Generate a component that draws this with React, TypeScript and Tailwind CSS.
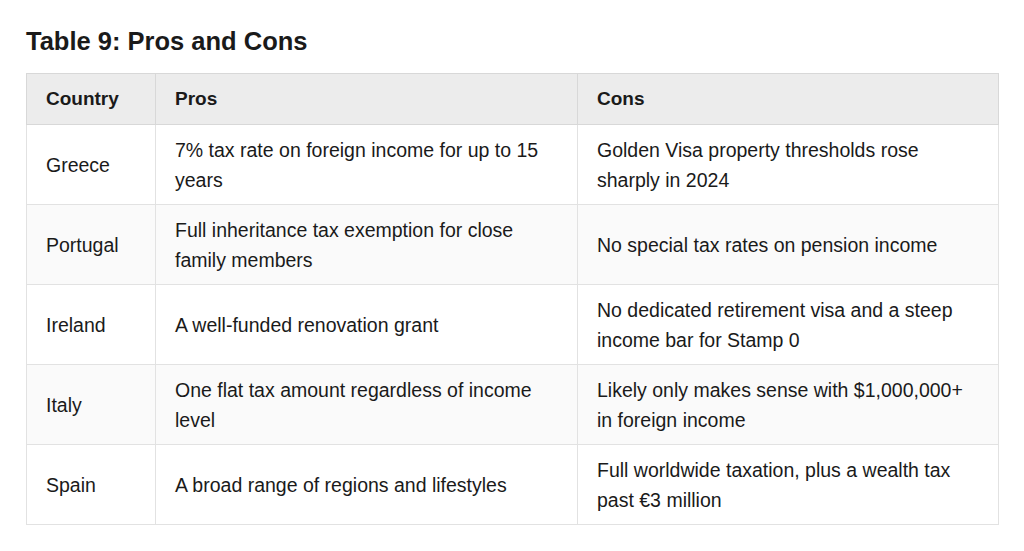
const rows = [
  ["Greece", "7% tax rate on foreign income for up to 15 years", "Golden Visa property thresholds rose sharply in 2024"],
  ["Portugal", "Full inheritance tax exemption for close family members", "No special tax rates on pension income"],
  ["Ireland", "A well-funded renovation grant", "No dedicated retirement visa and a steep income bar for Stamp 0"],
  ["Italy", "One flat tax amount regardless of income level", "Likely only makes sense with $1,000,000+ in foreign income"],
  ["Spain", "A broad range of regions and lifestyles", "Full worldwide taxation, plus a wealth tax past €3 million"],
]

export default function App() {
  return (
    <div className="min-h-screen bg-white px-[26px] pt-[24px] text-[#1a1a1a] font-['Liberation_Sans',Arial,sans-serif]">
      <h2 className="text-[25.5px] font-bold leading-[34px] mb-[15px]">Table 9: Pros and Cons</h2>
      <table className="w-[973px] table-fixed border-collapse border border-[#c6c6c6] text-[19.5px] leading-[30px]">
        <colgroup>
          <col className="w-[129px]" />
          <col className="w-[422px]" />
          <col />
        </colgroup>
        <thead>
          <tr className="bg-[#ececec] h-[51px]">
            <th className="text-left font-bold text-[19px] px-[19px] py-[10px] border border-[#d8d8d8]">Country</th>
            <th className="text-left font-bold text-[19px] px-[19px] py-[10px] border border-[#d8d8d8]">Pros</th>
            <th className="text-left font-bold text-[19px] px-[19px] py-[10px] border border-[#d8d8d8]">Cons</th>
          </tr>
        </thead>
        <tbody>
          {rows.map((r, i) => (
            <tr key={r[0]} className={i % 2 === 1 ? "bg-[#fafafa] h-[80px]" : "bg-white h-[80px]"}>
              {r.map((c) => (
                <td key={c} className="align-middle px-[19px] py-[9px] border border-[#e2e2e2]">{c}</td>
              ))}
            </tr>
          ))}
        </tbody>
      </table>
    </div>
  )
}
